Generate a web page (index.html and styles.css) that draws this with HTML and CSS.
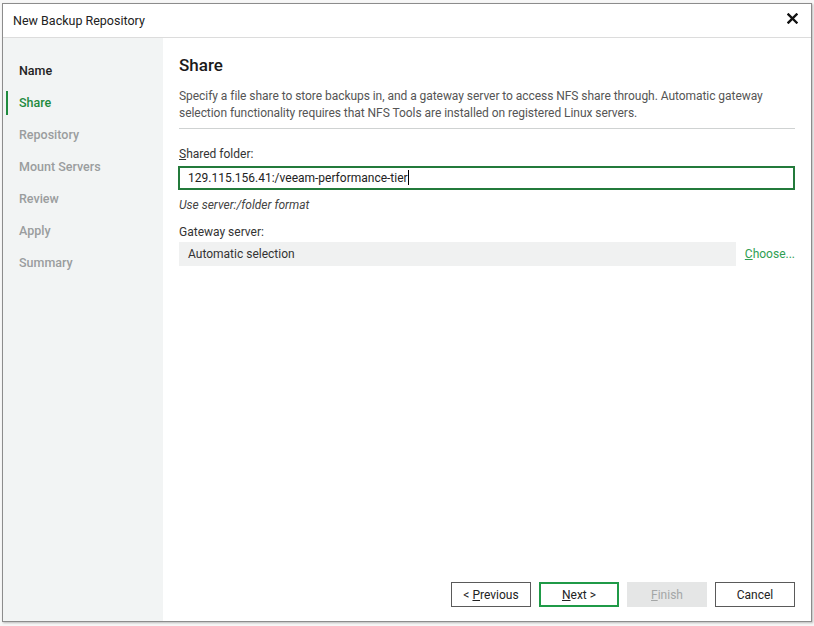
FILE: index.html
```html
<!DOCTYPE html>
<html lang="en">
  <head>
    <meta charset="UTF-8" />
    <title>New Backup Repository</title>
    <link rel="stylesheet" href="styles.css">
  </head>
  <body>
    <div class="dialog">
      <div class="titlebar">
        <span class="title">New Backup Repository</span>
        <svg class="close" width="11" height="11" viewBox="0 0 11 11">
          <path d="M1.5 1.5 L9.5 9.5 M9.5 1.5 L1.5 9.5" stroke="#111" stroke-width="2.4" stroke-linecap="square" />
        </svg>
      </div>
      <div class="main">
        <ul class="steps">
          <li class="done">Name</li>
          <li class="current">Share</li>
          <li>Repository</li>
          <li>Mount Servers</li>
          <li>Review</li>
          <li>Apply</li>
          <li>Summary</li>
        </ul>
        <div class="content">
          <h1>Share</h1>
          <p class="desc">Specify a file share to store backups in, and a gateway server to access NFS share through. Automatic gateway<br>selection functionality requires that NFS Tools are installed on registered Linux servers.</p>
          <div class="sep"></div>
          <div class="label"><u>S</u>hared folder:</div>
          <div class="input">129.115.156.41:/veeam-performance-tier<span class="caret"></span></div>
          <div class="hint">Use server:/folder format</div>
          <div class="label gw">Gateway server:</div>
          <div class="row">
            <div class="select">Automatic selection</div>
            <a class="link"><u>C</u>hoose...</a>
          </div>
          <div class="buttons">
            <button class="btn">&lt; <u>P</u>revious</button>
            <button class="btn primary"><u>N</u>ext &gt;</button>
            <button class="btn disabled"><u>F</u>inish</button>
            <button class="btn">Cancel</button>
          </div>
        </div>
      </div>
    </div>
  </body>
</html>
```

FILE: styles.css
```css
* {
  margin: 0;
  padding: 0;
  box-sizing: border-box;
}
html, body {
  height: 100%;
}
body {
  background: #f7f7f7;
  font-family: Roboto, "Noto Sans", sans-serif;
  font-size: 12px;
  color: #222;
  padding: 3px 2px 4px 2px;
}
.dialog {
  height: 100%;
  border: 1px solid #8c8c8c;
  background: #fff;
  display: flex;
  flex-direction: column;
  box-shadow: 1px 1px 2px rgba(0, 0, 0, 0.25);
}
.titlebar {
  height: 34px;
  flex: none;
  border-bottom: 1px solid #dcdcdc;
  display: flex;
  align-items: center;
  justify-content: space-between;
  padding: 0 13px 0 10px;
}
.title {
  font-size: 12.5px;
  color: #222;
}
.close {
  margin-top: -4px;
}
.main {
  flex: 1;
  display: flex;
  min-height: 0;
}
.steps {
  width: 160px;
  flex: none;
  background: #f2f4f4;
  list-style: none;
  padding-top: 17px;
}
.steps li {
  height: 32px;
  line-height: 32px;
  padding-left: 16px;
  font-size: 12.5px;
  font-weight: 500;
  color: #9a9d9e;
  position: relative;
}
.steps li.done {
  color: #222;
}
.steps li.current {
  color: #1f8b3e;
}
.steps li.current::before {
  content: '';
  position: absolute;
  left: 3px;
  top: 4px;
  width: 2px;
  height: 24px;
  background: #1f8b3e;
}
.content {
  flex: 1;
  display: flex;
  flex-direction: column;
  padding: 16px 16px 14px 16px;
}
h1 {
  font-size: 17px;
  font-weight: 500;
  line-height: 22px;
  color: #1a1a1a;
}
.desc {
  margin-top: 12px;
  line-height: 17px;
  color: #555;
  letter-spacing: -0.05px;
}
.sep {
  margin-top: 6px;
  height: 1px;
  background: #cfd2d2;
}
.label {
  margin-top: 17px;
  line-height: 17px;
  color: #333;
}
.label.gw {
  margin-top: 10px;
}
.input {
  margin-top: 3px;
  height: 24px;
  border: 2px solid #237a3b;
  line-height: 20px;
  padding-left: 8px;
  color: #222;
  margin-left: -1px;
}
.caret {
  display: inline-block;
  width: 1px;
  height: 15px;
  background: #000;
  vertical-align: -3px;
}
.hint {
  margin-top: 7px;
  line-height: 17px;
  font-style: italic;
  color: #444;
}
.row {
  margin-top: 1px;
  display: flex;
  align-items: center;
}
.select {
  flex: 1;
  height: 24px;
  line-height: 24px;
  background: #f0f1f1;
  padding-left: 9px;
  color: #333;
}
.link {
  margin-left: 9px;
  color: #2f9e52;
}
.buttons {
  margin-top: auto;
  display: flex;
  justify-content: flex-end;
  gap: 8px;
}
.btn {
  width: 80px;
  height: 25px;
  font-family: inherit;
  font-size: 12px;
  color: #222;
  background: #fff;
  border: 1px solid #5a5a5a;
}
.btn.primary {
  border: 2px solid #1f9a47;
}
.btn.disabled {
  background: #e5e6e6;
  border-color: #e5e6e6;
  color: #a4a6a6;
}
```
